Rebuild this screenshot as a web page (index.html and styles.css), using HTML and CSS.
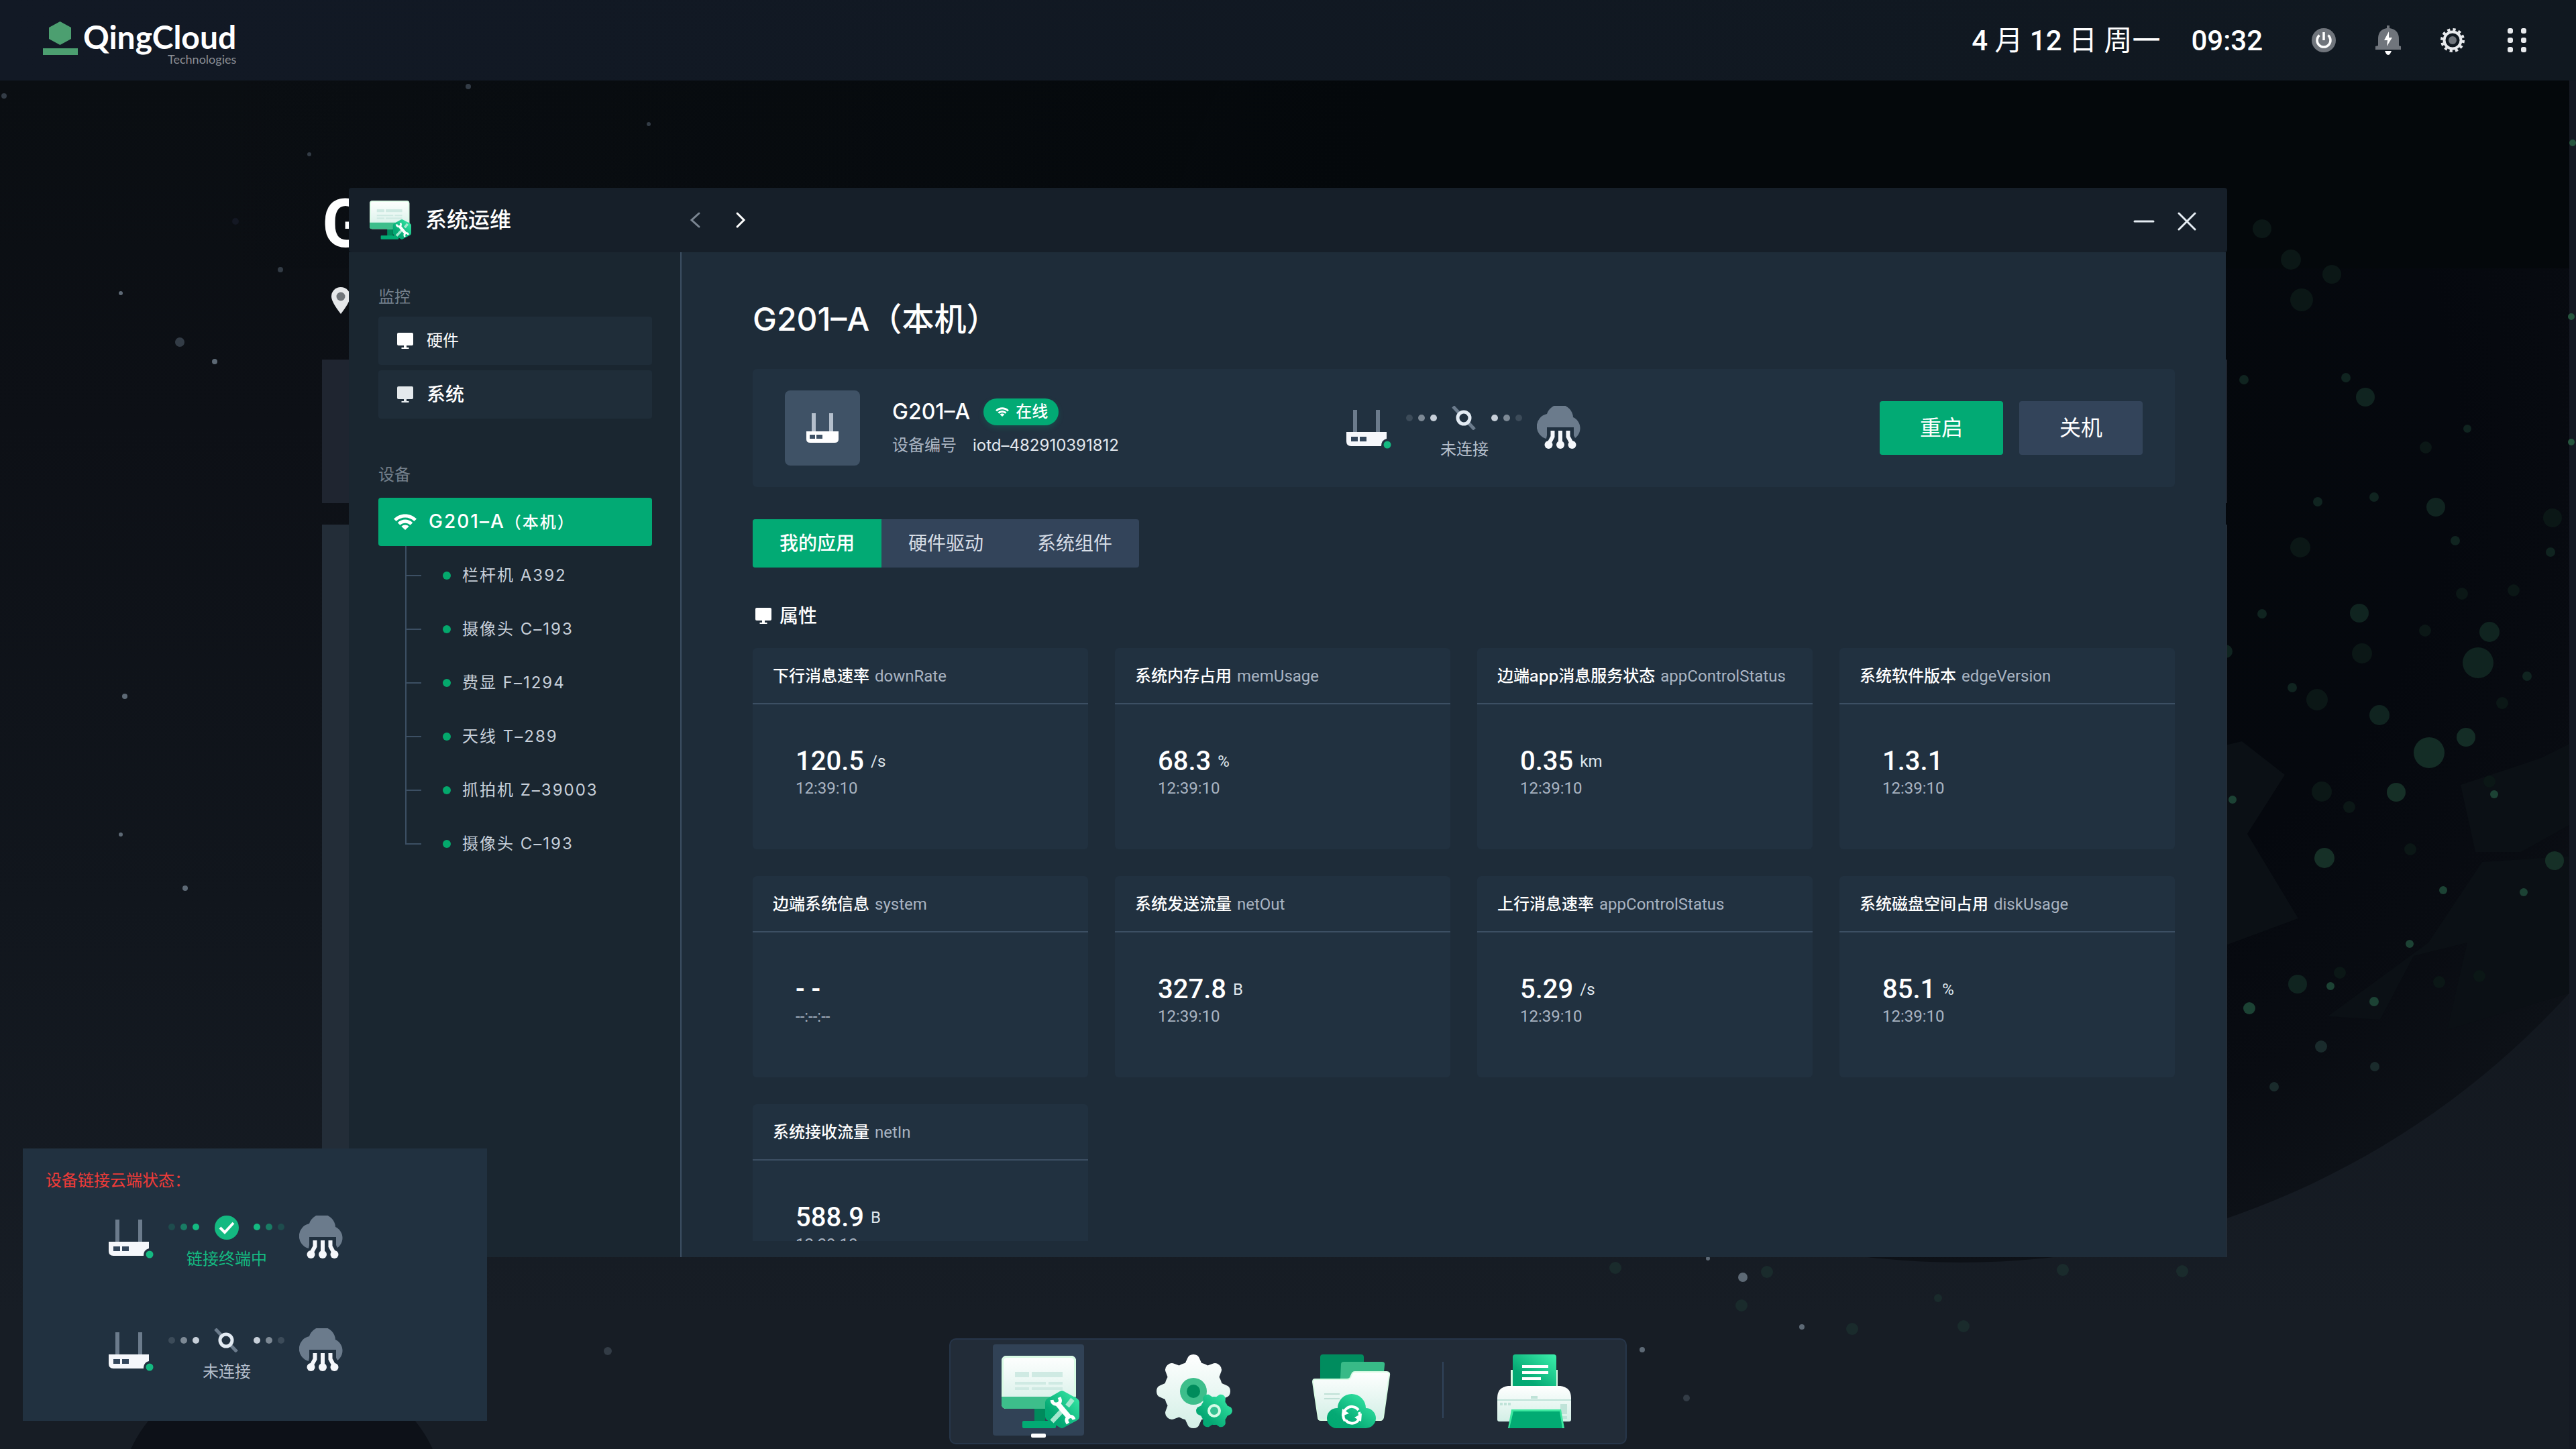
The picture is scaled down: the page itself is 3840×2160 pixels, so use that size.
FILE: index.html
```html
<!DOCTYPE html>
<html lang="zh-CN">
<head>
<meta charset="utf-8">
<meta name="viewport" content="width=device-width, initial-scale=1">
<title>QingCloud 系统运维</title>
<link rel="stylesheet" href="styles.css">
</head>
<body>

<svg class="defs" aria-hidden="true" width="0" height="0">
  <defs>
    <linearGradient id="paper" x1="0" y1="0" x2="0" y2="1"><stop offset="0" stop-color="#ffffff"/><stop offset="1" stop-color="#d3efe6"/></linearGradient>
    <linearGradient id="mint" x1="1" y1="0" x2="0" y2="1"><stop offset="0" stop-color="#3df0ac"/><stop offset="0.7" stop-color="#05a974"/><stop offset="1" stop-color="#00a870"/></linearGradient>
  </defs>

  <symbol id="icon-monitor" viewBox="0 0 24 24">
    <path d="M2 0h20a2 2 0 0 1 2 2v15a2 2 0 0 1-2 2H2a2 2 0 0 1-2-2V2a2 2 0 0 1 2-2z"/>
    <path class="stand" d="M10 19h4v3h3.500v2h-11v-2H10z"/>
  </symbol>

  <symbol id="icon-wifi" viewBox="0 0 34 24">
    <path d="M0 7.500C9.500-2 24.500-2 34 7.500l-3.600 3.600C23 3.700 11 3.700 3.600 11.100z"/>
    <path d="M5.800 13.200c6.200-6.200 16.200-6.200 22.400 0l-3.600 3.600c-4.200-4.200-11-4.200-15.200 0z"/>
    <path d="M11.400 18.800c3.100-3.100 8.100-3.100 11.200 0L17 24z"/>
  </symbol>

  <symbol id="icon-router" viewBox="0 0 68 68">
    <path fill="#6b7b8c" d="M10 6h6v33h-6zM44 6h6v33h-6z"/>
    <path fill="#f5f7fb" d="M0 39h60v10q-8 2-8 11H7q-7 0-7-7z"/>
    <path fill="#33465b" d="M7 46h10v7H7zM20 46h10v7H20z"/>
    <circle cx="61" cy="58" r="5.500" fill="#14b981"/>
  </symbol>

  <symbol id="icon-cloud" viewBox="0 0 70 68">
    <path fill="#6b7b8c" d="M14 49A19 19 0 0 1 15 12A20 20 0 0 1 54 17A18 18 0 0 1 57 48L55 44V32H15V44z"/>
    <g fill="none" stroke="#f5f7fb" stroke-width="6"><path d="M23.500 37v9L17 58M35 37v21M46.500 37v9L53 58"/></g>
    <g fill="#f5f7fb"><circle cx="17.500" cy="58" r="6"/><circle cx="35" cy="58" r="6"/><circle cx="52.500" cy="58" r="6"/></g>
  </symbol>

  <symbol id="app-ops" viewBox="0 0 136 136">
    <rect x="62" y="94" width="16" height="22" fill="#008a5c"/>
    <rect x="44" y="114" width="50" height="11" rx="2" fill="#02ab73"/>
    <rect x="13" y="17" width="111" height="79" rx="7" fill="url(#paper)"/>
    <rect x="14.500" y="18.500" width="108" height="76" rx="6" fill="none" stroke="#d9fbe4" stroke-width="3"/>
    <path fill="#3dbe8b" d="M13 78h111v12a6 6 0 0 1-6 6H19a6 6 0 0 1-6-6z"/>
    <path fill="#cfeae3" d="M33 41h21v8H33zM58 41h46v8H58zM33 56h46v4H33zM83 56h21v4H83zM33 64h21v4H33zM58 64h46v4H58z"/>
    <path fill="url(#mint)" d="M100 70q3-2 6 0l20 11q3 2 3 5v22q0 3-3 5l-20 11q-3 2-6 0l-19-11q-3-2-3-5V86q0-3 3-5z"/>
    <path stroke="#a5e8cf" stroke-width="7" d="M119 82l-8 10M103 99l-15 16"/>
    <path stroke="#fff" stroke-width="8" d="M97 89l17 20"/>
    <path fill="none" stroke="#fff" stroke-width="5" d="M99 79q4 8-3 10q-7 1-8-6M121 112q-2-6-7-4q-7 3-2 10"/>
  </symbol>

  <symbol id="app-settings" viewBox="0 0 136 136">
    <clipPath id="gear-big">
      <circle cx="65" cy="70" r="44"/>
      <path id="tooth" d="M50 34l6-13q2-6 9-6t9 6l6 13z"/>
      <use href="#tooth" transform="rotate(45 65 70)"/><use href="#tooth" transform="rotate(90 65 70)"/>
      <use href="#tooth" transform="rotate(135 65 70)"/><use href="#tooth" transform="rotate(180 65 70)"/>
      <use href="#tooth" transform="rotate(225 65 70)"/><use href="#tooth" transform="rotate(270 65 70)"/>
      <use href="#tooth" transform="rotate(315 65 70)"/>
    </clipPath>
    <clipPath id="gear-small">
      <circle cx="96" cy="99" r="21"/>
      <path id="cog" d="M87 82l4-8q5-4 10 0l4 8z" transform="rotate(30 96 99)"/>
      <use href="#cog" transform="rotate(60 96 99)"/><use href="#cog" transform="rotate(120 96 99)"/>
      <use href="#cog" transform="rotate(180 96 99)"/><use href="#cog" transform="rotate(240 96 99)"/>
      <use href="#cog" transform="rotate(300 96 99)"/>
    </clipPath>
    <rect x="10" y="14" width="112" height="112" fill="url(#paper)" clip-path="url(#gear-big)"/>
    <circle cx="65" cy="70" r="20" fill="#3dbe8b"/>
    <circle cx="65" cy="70" r="10" fill="#008c5c"/>
    <rect x="68" y="72" width="56" height="54" fill="url(#mint)" clip-path="url(#gear-small)"/>
    <circle cx="96" cy="99" r="8" fill="#34c091" stroke="#d5fbe6" stroke-width="4"/>
  </symbol>

  <symbol id="app-files" viewBox="0 0 136 136">
    <rect x="20" y="15" width="65" height="60" rx="4" fill="#008c5e"/>
    <path fill="#38ba87" d="M55 26h57q5 0 4 5l-4 40H49l2-41q0-4 4-4z"/>
    <path fill="url(#paper)" stroke="#d9fbe4" stroke-width="2" d="M12 52h48q5 0 6-5l1-2q1-4 5-4h47q5 0 4 5l-9 63q-1 4-4 4H21q-4 0-4-4L9 56q0-4 3-4z"/>
    <path fill="#bfe0d6" d="M26 73h23v2H26zM26 80h23v2H26z"/>
    <path fill="url(#mint)" d="M44 125a15 15 0 0 1 2-30a21 21 0 0 1 42 0a15 15 0 0 1 0 30z"/>
    <path fill="none" stroke="#fff" stroke-width="4" d="M57 114a13 13 0 0 1 2-18a12 12 0 0 1 18 2M78 101a13 13 0 0 1-3 14a12 12 0 0 1-17-2"/>
    <path fill="#fff" d="M52 107l1-11 10 7zM82 103l-1 12-10-6z"/>
  </symbol>

  <symbol id="app-printer" viewBox="0 0 136 136">
    <rect x="34" y="38" width="70" height="30" fill="#d9fbe4"/>
    <rect x="37" y="15" width="65" height="50" rx="4" fill="url(#mint)"/>
    <path fill="#fff" d="M51 31h39v4H51zM51 40h39v4H51zM51 49h28v4H51z"/>
    <path fill="url(#paper)" d="M30 62h78q16 2 16 18v32q0 3-3 3H17q-3 0-3-3V80q0-16 16-18z"/>
    <path fill="#bfe3d8" d="M14 82h110v2H14zM64 77h10v4H64zM18 87h4v4h-4zM24 87h4v4h-4zM30 87h4v4h-4zM108 89h10v15h-10zM108 107h10v4h-10z"/>
    <path fill="#3de8a0" d="M35 97h74l5 28H30z"/>
    <path fill="#02ab73" d="M38 100h69l4 25H32z"/>
  </symbol>
</svg>

<header class="topbar">
  <a class="brand" href="#" aria-label="QingCloud Technologies">
    <svg class="brand-mark" viewBox="0 0 52 50" aria-hidden="true">
      <path fill="#4c9f70" d="M25.500 0L42 9v17l-16.500 9L9 26V9zM0 40h52v10H0z"/>
    </svg>
    <span class="brand-text">
      <span class="brand-name">QingCloud</span>
      <span class="brand-sub">Technologies</span>
    </span>
  </a>
  <div class="clock">
    <time class="date"><b>4</b> 月 <b>12</b> 日 周一</time>
    <time class="time">09:32</time>
  </div>
  <div class="tray">
    <button class="tray-button" type="button" aria-label="电源">
      <svg viewBox="0 0 48 48"><circle cx="24" cy="24" r="18" fill="#70757c"/><path d="M17.500 16.500a10 10 0 1 0 13 0M24 12v12" fill="none" stroke="#fff" stroke-width="3.500"/></svg>
    </button>
    <button class="tray-button" type="button" aria-label="通知">
      <svg viewBox="0 0 48 48"><path fill="#70757c" d="M22 2h4v4q14 2 14 16v10l3 1v5H5v-5l4-1V22Q9 8 22 6z"/><path fill="#fff" d="M25 11l-7 13h5l-1 9 8-13h-5zM19 40h10l-2 4q-3 4-6 0z"/></svg>
    </button>
    <button class="tray-button" type="button" aria-label="设置">
      <svg viewBox="0 0 48 48"><circle cx="24" cy="24" r="16" fill="none" stroke="#e8eaed" stroke-width="4" stroke-dasharray="4.200 4.177"/><circle cx="24" cy="24" r="12.500" fill="none" stroke="#e8eaed" stroke-width="4"/><circle cx="24" cy="24" r="6" fill="#70757c"/></svg>
    </button>
    <button class="tray-button" type="button" aria-label="应用">
      <svg viewBox="0 0 48 48" fill="#e8eaed"><rect x="10" y="6" width="8" height="8" rx="3"/><rect x="30" y="6" width="8" height="8" rx="3"/><rect x="10" y="20" width="8" height="8" rx="3"/><rect x="30" y="20" width="8" height="8" rx="3"/><rect x="10" y="34" width="8" height="8" rx="3"/><rect x="30" y="34" width="8" height="8" rx="3"/></svg>
    </button>
  </div>
</header>

<main class="desktop">
  <svg class="backdrop" viewBox="0 120 3840 2040" preserveAspectRatio="xMidYMid slice" aria-hidden="true">
    <defs>
      <radialGradient id="globe" gradientUnits="userSpaceOnUse" cx="2923" cy="657" r="1225">
        <stop offset="0" stop-color="#04080b"/><stop offset="0.600" stop-color="#05080e"/><stop offset="0.850" stop-color="#090c12"/><stop offset="1" stop-color="#0d1117"/>
      </radialGradient>
      <linearGradient id="fade" x1="0" y1="0" x2="1" y2="0"><stop offset="0" stop-color="#04080b" stop-opacity="0"/><stop offset="0.500" stop-color="#04080b"/></linearGradient>
    </defs>
    <circle cx="2923" cy="657" r="1225" fill="url(#globe)"/>
    <rect x="300" y="120" width="3540" height="280" fill="url(#fade)"/>
    <g fill="#0b1015">
      <path d="M3300 1115l42-10 64 50-56 88 76 126-108 40h-18z"/>
      <path d="M3668 1170l120-40 60-30v120l-90 50h-68z"/>
      <path d="M3470 1515l150-110 80-120 148-10v200l-200 60 30-130-80 20-50 95z"/>
    </g>
    <ellipse cx="420" cy="2230" rx="240" ry="200" fill="#0d1118"/>
    <rect x="3830" y="120" width="10" height="2040" fill="#151923"/>
    <g fill="#102420">
      <circle cx="3526" cy="592" r="14"/><circle cx="3631" cy="756" r="14"/><circle cx="3517" cy="914" r="14"/><circle cx="3711" cy="942" r="15"/>
      <circle cx="3694" cy="988" r="23"/><circle cx="3547" cy="1066" r="15"/><circle cx="3621" cy="1122" r="23" fill="#142d26"/><circle cx="3676" cy="1099" r="14" fill="#142d26"/>
      <circle cx="3572" cy="1181" r="14" fill="#163027"/><circle cx="3465" cy="1279" r="15" fill="#163027"/><circle cx="3808" cy="1283" r="14" fill="#163027"/><circle cx="3425" cy="1467" r="14"/>
      <circle cx="3318" cy="971" r="10"/><circle cx="3345" cy="566" r="7"/><circle cx="3497" cy="563" r="7"/><circle cx="3678" cy="639" r="6"/>
      <circle cx="3455" cy="748" r="7"/><circle cx="3539" cy="741" r="7"/><circle cx="3660" cy="806" r="7"/><circle cx="3802" cy="823" r="7"/>
      <circle cx="3767" cy="1008" r="7"/><circle cx="3372" cy="915" r="7"/><circle cx="3417" cy="1025" r="7"/>
    </g>
    <g fill="#0b1716">
      <circle cx="3372" cy="341" r="14"/><circle cx="3415" cy="387" r="15"/><circle cx="3476" cy="409" r="14"/><circle cx="3431" cy="447" r="17"/>
      <circle cx="3616" cy="667" r="9"/><circle cx="3429" cy="816" r="15"/><circle cx="3805" cy="772" r="14"/><circle cx="3521" cy="974" r="15"/>
      <circle cx="3615" cy="940" r="9"/><circle cx="3670" cy="885" r="9"/><circle cx="3747" cy="880" r="9"/><circle cx="3454" cy="1043" r="16"/>
      <circle cx="3461" cy="1180" r="15"/><circle cx="3730" cy="1048" r="9"/><circle cx="3711" cy="1165" r="9"/><circle cx="3502" cy="1203" r="9"/>
      <circle cx="3593" cy="1266" r="9"/><circle cx="3696" cy="1455" r="9"/><circle cx="3636" cy="1464" r="9"/><circle cx="3488" cy="1450" r="9"/>
    </g>
    <g fill="#1c4234">
      <circle cx="3718" cy="1184" r="6"/><circle cx="3642" cy="1327" r="6"/><circle cx="3762" cy="1330" r="6"/><circle cx="3592" cy="1407" r="6"/>
      <circle cx="3474" cy="1470" r="6"/><circle cx="3539" cy="1493" r="7"/><circle cx="3328" cy="1192" r="6"/><circle cx="3353" cy="1503" r="9"/>
      <circle cx="3835" cy="213" r="5" fill="#27553f"/><circle cx="3833" cy="472" r="5" fill="#27553f"/><circle cx="3833" cy="659" r="5" fill="#27553f"/>
    </g>
    <g fill="#1a2b2c">
      <circle cx="3075" cy="1893" r="9"/><circle cx="2634" cy="1896" r="9"/><circle cx="2596" cy="1946" r="9"/><circle cx="3253" cy="1895" r="9"/>
      <circle cx="2761" cy="1981" r="9"/><circle cx="2927" cy="1977" r="9"/><circle cx="2889" cy="1935" r="6"/><circle cx="2408" cy="1890" r="9"/>
      <circle cx="3460" cy="1560" r="9"/><circle cx="3540" cy="1590" r="7"/><circle cx="3390" cy="1620" r="7"/>
    </g>
    <g fill="#333c46">
      <circle cx="698" cy="129" r="4"/><circle cx="6" cy="143" r="4"/><circle cx="967" cy="185" r="3"/><circle cx="461" cy="230" r="3"/>
      <circle cx="418" cy="402" r="4"/><circle cx="268" cy="510" r="7"/><circle cx="351" cy="330" r="5" fill="#141823"/><circle cx="906" cy="2014" r="6"/>
    </g>
    <g fill="#5d6975">
      <circle cx="180" cy="437" r="3"/><circle cx="320" cy="539" r="4"/><circle cx="186" cy="1038" r="4"/><circle cx="276" cy="1324" r="4"/><circle cx="180" cy="1244" r="3"/>
      <circle cx="2598" cy="1904" r="7"/><circle cx="2546" cy="1876" r="3"/><circle cx="2686" cy="1978" r="4"/><circle cx="2448" cy="2012" r="4"/><circle cx="2514" cy="2084" r="5" fill="#333c46"/>
    </g>
  </svg>

  <section class="home">
    <h1 class="home-title">G</h1>
    <svg class="home-pin" viewBox="0 0 28 40" aria-hidden="true"><path fill="#e6e8ea" d="M14 0a14 14 0 0 1 14 14q0 8-14 26Q0 22 0 14A14 14 0 0 1 14 0z"/><circle cx="14" cy="14" r="6.500" fill="#70757a"/></svg>
    <div class="home-panel"></div>
    <div class="home-panel home-panel-tall"></div>
  </section>

  <section class="window" aria-labelledby="window-title">
    <header class="window-bar">
      <div class="window-name">
        <svg class="window-icon" viewBox="11 15 120 112" aria-hidden="true"><use href="#app-ops" width="136" height="136"/></svg>
        <h2 id="window-title">系统运维</h2>
      </div>
      <div class="window-nav">
        <button class="bar-button" type="button" aria-label="后退"><svg viewBox="0 0 32 32"><path d="M22 6L11 16l11 10" stroke="#7b8692"/></svg></button>
        <button class="bar-button" type="button" aria-label="前进"><svg viewBox="0 0 32 32"><path d="M11 6l10 10-10 10" stroke="#fff"/></svg></button>
      </div>
      <div class="window-controls">
        <button class="bar-button" type="button" aria-label="最小化"><svg viewBox="0 0 32 32"><path d="M2 18h28" stroke="#e6edf3"/></svg></button>
        <button class="bar-button" type="button" aria-label="关闭"><svg viewBox="0 0 32 32"><path d="M4 6l24 24M28 6L4 30" stroke="#e6edf3"/></svg></button>
      </div>
    </header>

    <div class="window-body">
      <nav class="sidebar">
        <h3 class="group-label">监控</h3>
        <a class="menu-item" href="#"><svg class="icon-24"><use href="#icon-monitor"/></svg>硬件</a>
        <a class="menu-item menu-item-large" href="#"><svg class="icon-24"><use href="#icon-monitor"/></svg>系统</a>

        <h3 class="group-label group-label-devices">设备</h3>
        <a class="device-root" href="#"><svg class="icon-wifi"><use href="#icon-wifi"/></svg><span>G201–A<small>（本机）</small></span></a>
        <ul class="device-tree">
          <li><a href="#">栏杆机 A392</a></li>
          <li><a href="#">摄像头 C–193</a></li>
          <li><a href="#">费显 F–1294</a></li>
          <li><a href="#">天线 T–289</a></li>
          <li><a href="#">抓拍机 Z–39003</a></li>
          <li><a href="#">摄像头 C–193</a></li>
        </ul>
      </nav>

      <div class="content">
        <h2 class="page-title">G201–A（本机）</h2>

        <section class="device-card">
          <div class="device-info">
            <div class="device-thumb">
              <svg viewBox="0 0 48 44" aria-hidden="true"><path fill="#b4bfcc" d="M8 0h6v27H8zM34 0h6v27h-6z"/><path fill="#fff" d="M0 27h48v12q0 5-6 5H6q-6 0-6-5z"/><path fill="#3f5266" d="M5 32h8v6H5zM15 32h9v6h-9z"/></svg>
            </div>
            <div class="device-text">
              <div class="device-name">G201–A <span class="online"><svg class="icon-online"><use href="#icon-wifi"/></svg>在线</span></div>
              <dl class="device-id"><dt>设备编号</dt><dd>iotd–482910391812</dd></dl>
            </div>
          </div>
          <div class="link link-card">
            <svg class="link-router"><use href="#icon-router"/></svg>
            <div class="link-middle">
              <svg class="link-line" viewBox="0 0 176 36" fill="#d9e1ea">
                <circle cx="6" cy="18" r="5" opacity="0.150"/><circle cx="24" cy="18" r="5" opacity="0.500"/><circle cx="42" cy="18" r="5" opacity="0.900"/>
                <path d="M71 1l32 34" stroke="#6b7b8c" stroke-width="5"/><circle cx="87" cy="18" r="9" fill="#213140" stroke="#e3ebf3" stroke-width="5"/>
                <circle cx="133" cy="18" r="5" opacity="0.900"/><circle cx="151" cy="18" r="5" opacity="0.500"/><circle cx="169" cy="18" r="5" opacity="0.150"/>
              </svg>
              <span class="link-label">未连接</span>
            </div>
            <svg class="link-cloud"><use href="#icon-cloud"/></svg>
          </div>
          <div class="device-actions">
            <button class="button button-primary" type="button">重启</button>
            <button class="button" type="button">关机</button>
          </div>
        </section>

        <div class="tabs" role="tablist">
          <button class="tab tab-active" type="button" role="tab" aria-selected="true">我的应用</button>
          <button class="tab" type="button" role="tab" aria-selected="false">硬件驱动</button>
          <button class="tab" type="button" role="tab" aria-selected="false">系统组件</button>
        </div>

        <h3 class="section-title"><svg class="icon-24 icon-dim-stand"><use href="#icon-monitor"/></svg>属性</h3>

        <div class="cards">
          <article class="card">
            <h4 class="card-title">下行消息速率 <span>downRate</span></h4>
            <div class="card-body"><p class="value">120.5 <span>/s</span></p><time>12:39:10</time></div>
          </article>
          <article class="card">
            <h4 class="card-title">系统内存占用 <span>memUsage</span></h4>
            <div class="card-body"><p class="value">68.3 <span>%</span></p><time>12:39:10</time></div>
          </article>
          <article class="card">
            <h4 class="card-title">边端app消息服务状态 <span>appControlStatus</span></h4>
            <div class="card-body"><p class="value">0.35 <span>km</span></p><time>12:39:10</time></div>
          </article>
          <article class="card">
            <h4 class="card-title">系统软件版本 <span>edgeVersion</span></h4>
            <div class="card-body"><p class="value">1.3.1</p><time>12:39:10</time></div>
          </article>
          <article class="card">
            <h4 class="card-title">边端系统信息 <span>system</span></h4>
            <div class="card-body"><p class="value">- -</p><time>--:--:--</time></div>
          </article>
          <article class="card">
            <h4 class="card-title">系统发送流量 <span>netOut</span></h4>
            <div class="card-body"><p class="value">327.8 <span>B</span></p><time>12:39:10</time></div>
          </article>
          <article class="card">
            <h4 class="card-title">上行消息速率 <span>appControlStatus</span></h4>
            <div class="card-body"><p class="value">5.29 <span>/s</span></p><time>12:39:10</time></div>
          </article>
          <article class="card">
            <h4 class="card-title">系统磁盘空间占用 <span>diskUsage</span></h4>
            <div class="card-body"><p class="value">85.1 <span>%</span></p><time>12:39:10</time></div>
          </article>
          <article class="card">
            <h4 class="card-title">系统接收流量 <span>netIn</span></h4>
            <div class="card-body"><p class="value">588.9 <span>B</span></p><time>12:39:10</time></div>
          </article>
        </div>
      </div>
    </div>
  </section>

  <aside class="status-panel">
    <h3 class="status-title">设备链接云端状态：</h3>
    <div class="status-list">
      <div class="link link-on">
        <svg class="link-router"><use href="#icon-router"/></svg>
        <div class="link-middle">
          <svg class="link-line" viewBox="0 0 176 36" fill="#14b981">
            <circle cx="6" cy="17" r="5" opacity="0.200"/><circle cx="24" cy="17" r="5" opacity="0.550"/><circle cx="42" cy="17" r="5"/>
            <circle cx="88" cy="18" r="18"/><path d="M78 18l7 7 13-14" fill="none" stroke="#fff" stroke-width="4"/>
            <circle cx="133" cy="17" r="5"/><circle cx="151" cy="17" r="5" opacity="0.550"/><circle cx="169" cy="17" r="5" opacity="0.200"/>
          </svg>
          <span class="link-label">链接终端中</span>
        </div>
        <svg class="link-cloud"><use href="#icon-cloud"/></svg>
      </div>
      <div class="link">
        <svg class="link-router"><use href="#icon-router"/></svg>
        <div class="link-middle">
          <svg class="link-line" viewBox="0 0 176 36" fill="#d9e1ea">
            <circle cx="6" cy="18" r="5" opacity="0.150"/><circle cx="24" cy="18" r="5" opacity="0.500"/><circle cx="42" cy="18" r="5" opacity="0.900"/>
            <path d="M71 1l32 34" stroke="#6b7b8c" stroke-width="5"/><circle cx="87" cy="18" r="9" fill="#213140" stroke="#e3ebf3" stroke-width="5"/>
            <circle cx="133" cy="18" r="5" opacity="0.900"/><circle cx="151" cy="18" r="5" opacity="0.500"/><circle cx="169" cy="18" r="5" opacity="0.150"/>
          </svg>
          <span class="link-label">未连接</span>
        </div>
        <svg class="link-cloud"><use href="#icon-cloud"/></svg>
      </div>
    </div>
  </aside>

  <nav class="dock" aria-label="程序坞">
    <div class="dock-group">
      <button class="dock-item dock-item-active" type="button" aria-label="系统运维"><svg><use href="#app-ops"/></svg></button>
      <button class="dock-item" type="button" aria-label="系统设置"><svg><use href="#app-settings"/></svg></button>
      <button class="dock-item" type="button" aria-label="文件同步"><svg><use href="#app-files"/></svg></button>
    </div>
    <span class="dock-divider"></span>
    <button class="dock-item" type="button" aria-label="打印机"><svg><use href="#app-printer"/></svg></button>
  </nav>
</main>

</body>
</html>
```

FILE: styles.css
```css
:root {
  --green: #02aa74;
  --line: #3c4f63;
  --surface: #213140;
  --muted: #a9b4c2;
  --cjk: "Noto Sans CJK SC";
}

* { box-sizing: border-box; margin: 0; padding: 0; }

body {
  display: flex;
  flex-direction: column;
  min-height: 100vh;
  background: #151b23;
  color: #fff;
  font-family: Inter, var(--cjk), sans-serif;
  font-size: 24px;
  line-height: 36px;
  overflow: hidden;
}

a { color: inherit; text-decoration: none; }
ul { list-style: none; }
button { border: 0; background: none; color: inherit; font: inherit; cursor: pointer; }
svg { display: block; flex: none; }
.defs { position: absolute; }

/* Top bar */
.topbar {
  display: flex;
  align-items: center;
  height: 120px;
  padding: 0 64px;
  background: linear-gradient(90deg, #121925, #101820);
}
.brand { display: flex; gap: 8px; align-self: flex-start; padding-top: 32px; }
.brand-mark { width: 52px; height: 50px; }
.brand-text { display: flex; flex-direction: column; }
.brand-name { font: 700 48px/46px Lato, sans-serif; }
.brand-sub { align-self: flex-end; font: 400 18px/20px Lato, sans-serif; color: #8b8f96; }
.clock {
  display: flex;
  gap: 46px;
  margin-left: auto;
  margin-right: 67px;
  padding-top: 2px;
  font: 400 42px/60px Roboto, var(--cjk), sans-serif;
}
.date b, .time { font-weight: 500; }
.tray { display: flex; gap: 48px; }
.tray-button, .tray-button svg { width: 48px; height: 48px; }

/* Desktop */
.desktop {
  position: relative;
  flex: 1;
  background: linear-gradient(180deg, #0a0e12 0%, #0d1016 25%, #11161d 60%, #171d25 90%);
}
.backdrop { position: absolute; inset: 0; width: 100%; height: 100%; }
.home { position: absolute; inset: 164px 520px 286px 480px; overflow: hidden; }
.home-title { font: 700 100px/100px Roboto, sans-serif; }
.home-pin { width: 28px; height: 40px; margin: 44px 0 68px 14px; }
.home-panel { height: 214px; margin-bottom: 32px; background: #1f2530; }
.home-panel-tall { height: 1092px; background: #232d38; }

/* Window */
.window {
  position: absolute;
  inset: 160px 520px 286px;
  display: flex;
  flex-direction: column;
}
.window-bar {
  display: flex;
  align-items: center;
  height: 96px;
  padding: 0 44px 0 30px;
  background: #161f29;
  border-radius: 4px;
}
.window-name { display: flex; align-items: center; gap: 20px; width: 470px; }
.window-icon { width: 64px; height: 60px; }
.window-name h2 { font-size: 32px; font-weight: 500; line-height: 48px; }
.window-nav { display: flex; gap: 36px; }
.window-controls { display: flex; gap: 32px; margin-left: auto; }
.bar-button, .bar-button svg { width: 32px; height: 32px; }
.bar-button svg { fill: none; stroke-width: 3; stroke-linecap: round; }
.window-body { display: flex; flex: 1; min-height: 0; margin-right: 2px; }

/* Sidebar */
.sidebar {
  width: 496px;
  padding: 49px 42px 0 44px;
  background: #1a2630;
  border-right: 2px solid var(--line);
}
.group-label { margin-bottom: 11px; font-size: 24px; font-weight: 400; color: #74808c; }
.group-label-devices { margin: 66px 0 16px; }
.menu-item {
  display: flex;
  align-items: center;
  gap: 20px;
  height: 72px;
  margin-bottom: 8px;
  padding-left: 28px;
  border-radius: 4px;
  background: #1f2d39;
}
.menu-item-large { font-size: 28px; font-weight: 500; }
.icon-24 { width: 24px; height: 24px; fill: #fff; }
.icon-dim-stand .stand { fill: #74808c; }
.menu-item-large .icon-24 { fill: #e4e9ec; }
.device-root {
  display: flex;
  align-items: center;
  gap: 18px;
  height: 72px;
  padding-left: 23px;
  border-radius: 4px;
  background: var(--green);
  font-size: 28px;
  font-weight: 500;
  letter-spacing: 2px;
}
.device-root small { font-size: 24px; }
.icon-wifi { width: 34px; height: 24px; fill: #fff; }
.device-tree {
  padding-top: 4px;
  color: #c8d0da;
  letter-spacing: 2px;
  background: linear-gradient(var(--line), var(--line)) 40px 0 / 2px 4px no-repeat;
}
.device-tree li {
  padding-left: 96px;
  background:
    linear-gradient(var(--line), var(--line)) 40px 0 / 2px 100% no-repeat,
    linear-gradient(var(--line), var(--line)) 40px 50% / 24px 2px no-repeat;
}
.device-tree li:last-child { background-size: 2px 50%, 24px 2px; }
.device-tree a { display: flex; align-items: center; gap: 17px; height: 80px; }
.device-tree a::before { content: ""; width: 12px; height: 12px; border-radius: 50%; background: #04a86c; }

/* Content */
.content {
  display: flex;
  flex: 1;
  flex-direction: column;
  min-width: 0;
  padding: 68px 76px 24px 106px;
  background: #1e2c39;
}
.page-title { font-size: 48px; font-weight: 500; line-height: 64px; }
.device-card {
  display: grid;
  grid-template-columns: 1fr auto 1fr;
  align-items: center;
  height: 176px;
  margin: 42px 0 48px;
  padding: 0 48px;
  border-radius: 6px;
  background: var(--surface);
}
.device-info { display: flex; align-items: center; gap: 48px; }
.device-thumb {
  display: grid;
  place-items: center;
  width: 112px;
  height: 112px;
  border-radius: 8px;
  background: #3f5266;
}
.device-thumb svg { width: 48px; height: 44px; }
.device-text { display: flex; flex-direction: column; gap: 12px; }
.device-name { display: flex; gap: 20px; font-size: 32px; font-weight: 500; line-height: 40px; }
.online {
  display: flex;
  align-items: center;
  gap: 10px;
  padding: 0 16px 0 18px;
  border-radius: 20px;
  background: var(--green);
  box-shadow: 0 4px 8px rgba(2, 170, 116, 0.2);
  font-size: 24px;
}
.icon-online { width: 20px; height: 14px; fill: #fff; }
.device-id { display: flex; gap: 24px; }
.device-id dt { color: var(--muted); }
.device-id dd { color: #e3e8ee; }
.device-actions { display: flex; justify-content: flex-end; gap: 24px; }
.button { width: 184px; height: 80px; border-radius: 4px; background: #33445a; font-size: 32px; }
.button-primary { background: var(--green); }

/* Router-to-cloud link */
.link { display: flex; gap: 20px; }
.link-card { padding: 16px 0 0 4px; }
.link-router { width: 68px; height: 68px; }
.link-cloud { width: 70px; height: 68px; }
.link-middle { display: flex; flex-direction: column; align-items: center; gap: 11px; width: 176px; }
.link-line { width: 176px; height: 36px; }
.link-label { color: #b4becb; }
.link-on .link-label { color: #14b981; }

/* Tabs */
.tabs { display: flex; align-self: flex-start; border-radius: 4px; background: #33445a; overflow: hidden; }
.tab { width: 192px; height: 72px; color: #d6dde6; font-size: 28px; }
.tab-active { background: var(--green); color: #fff; font-weight: 500; }
.section-title {
  display: flex;
  align-items: center;
  gap: 12px;
  margin: 54px 0 30px;
  padding-left: 4px;
  font-size: 28px;
  font-weight: 500;
}

/* Property cards */
.cards {
  display: grid;
  grid-template-columns: repeat(4, 1fr);
  grid-auto-rows: 300px;
  gap: 40px;
  flex: 1;
  min-height: 0;
  overflow: hidden;
}
.card { border-radius: 6px; background: var(--surface); }
.card-title {
  display: flex;
  align-items: center;
  gap: 8px;
  height: 84px;
  padding: 2px 0 0 30px;
  border-bottom: 2px solid var(--line);
  font-size: 24px;
  font-weight: 500;
}
.card-title span { color: var(--muted); font-family: Roboto, sans-serif; font-weight: 400; }
.card-body { padding: 61px 64px 0; font-family: Roboto, sans-serif; }
.value { display: flex; align-items: center; gap: 10px; font-size: 40px; font-weight: 500; line-height: 48px; }
.value span { color: #dfe5ec; font-size: 24px; font-weight: 400; }
.card-body time { display: block; line-height: 32px; color: var(--muted); }

/* Cloud status panel */
.status-panel {
  position: absolute;
  left: 34px;
  bottom: 42px;
  width: 692px;
  padding: 30px 34px 55px;
  background: var(--surface);
}
.status-title { color: #f03b38; font-size: 24px; font-weight: 400; }
.status-list { display: flex; flex-direction: column; gap: 85px; padding: 34px 0 0 94px; }

/* Dock */
.dock {
  position: absolute;
  left: 50%;
  bottom: 7px;
  display: flex;
  align-items: center;
  gap: 66px;
  padding: 7px 69px 11px 63px;
  transform: translateX(-50%);
  border: 2px solid #27364a;
  border-radius: 10px;
  background: #222c38;
}
.dock-group { display: flex; gap: 98px; }
.dock-item { position: relative; width: 136px; height: 136px; border-radius: 4px; }
.dock-item svg { width: 136px; height: 136px; }
.dock-item-active { background: #314256; }
.dock-item-active::after {
  content: "";
  position: absolute;
  left: 57px;
  bottom: -3px;
  width: 22px;
  height: 6px;
  border-radius: 2px;
  background: #fff;
}
.dock-divider { width: 2px; height: 84px; background: #31435a; }
```
